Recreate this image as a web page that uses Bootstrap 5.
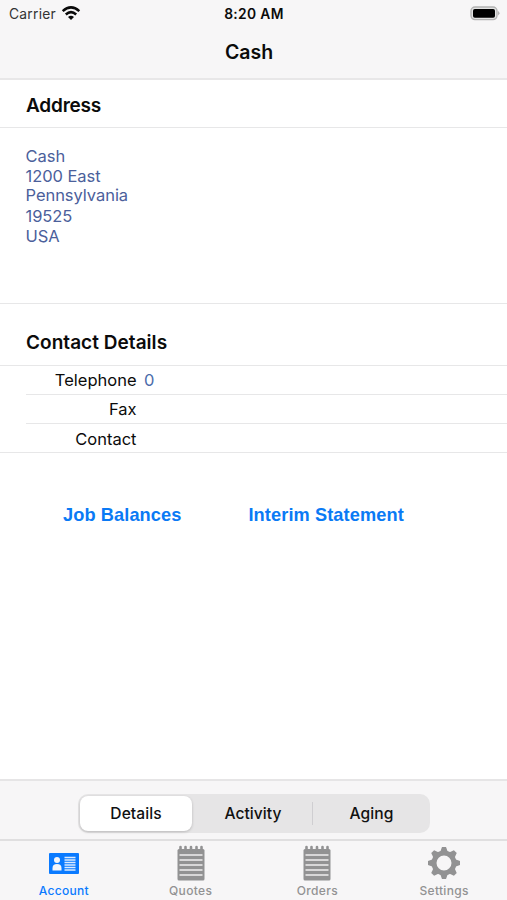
<!DOCTYPE html>
<html lang="en">
<head>
<meta charset="utf-8">
<meta name="viewport" content="width=device-width, initial-scale=1">
<title>Cash</title>
<link href="https://cdn.jsdelivr.net/npm/bootstrap@5.3.0/dist/css/bootstrap.min.css" rel="stylesheet">
<style>
body{font-family:Inter,"Liberation Sans",sans-serif;color:#0b0b0b;background:#fff;font-size:16.5px;line-height:20px}
.screen{height:900px;overflow:hidden}
.bar{background:#f7f6f7}
.topbar{height:80px;border-bottom:2px solid #e8e7e8}
.status{height:28px;padding:0 7px 0 9px}
.status>*{flex:1 1 0}
.carrier{font-size:13.8px;color:#333;letter-spacing:.25px}
.wifi{margin:-2px 0 0 4px}
.clock{font-size:13.8px;font-weight:600;letter-spacing:.35px;padding-right:1px}
.title{font-size:19.5px;font-weight:600;height:50px;padding-right:9px}
.heading{font-size:19px;font-weight:600;margin:0;padding-left:26px;letter-spacing:-.2px}
.rule{border-bottom:1px solid #e7e7e8}
.h-address{height:48px;padding-top:5px}
.address{height:176px;padding:18px 26px 0 25.5px;color:#4b609b;letter-spacing:-.05px}
.address div{height:20px}
.address div:nth-child(3){margin-top:-1px;margin-bottom:1px}
.h-contact{height:62px;padding-top:18px;letter-spacing:.04px}
.contact-row{height:29px;margin-left:26px}
.contact-row.last{margin-left:0;padding:1px 0 0 26px}
.contact-row dt{width:110.5px;font-weight:400;text-align:right}
.contact-row dd{margin:0 0 0 7.5px;color:#4b6cab}
.actions{padding:52px 63px 0;gap:67px}
.actions a{font:bold 18.2px/20px "Liberation Sans",Arial,sans-serif;letter-spacing:.1px;color:#0a7af5;text-decoration:none}
.toolbar{height:60px;border-top:2px solid #e6e5e6;padding:7px 0 0}
.segments{width:352px;height:39px;margin-left:78px;background:#e6e5e6;border-radius:10px;padding:2px}
.segments button{border:0;background:none;padding:0;width:118px;flex:none;font-size:15.6px;font-weight:500;letter-spacing:.06px;color:#111}
.segments .chosen{width:112px;margin-right:2px;background:#fff;border-radius:8px;box-shadow:0 1px 3px #0003}
.segments button:last-child{width:117px}
.segments i{width:1px;height:23px;flex:none;background:#cfced1}
.tabs{height:61px;border-top:2px solid #e0dfe0}
.tabs a{color:#929293;text-decoration:none;font-size:12px;font-weight:500;line-height:14px;letter-spacing:.32px;padding:4px 0 0 1px}
.tabs a.current{color:#0a7aff}
.tabs svg{display:block;margin-bottom:3px}
</style>
</head>
<body>
<div class="screen d-flex flex-column">
  <header class="bar topbar">
    <div class="status d-flex align-items-center">
      <div class="d-flex align-items-center"><span class="carrier">Carrier</span>
        <svg class="wifi" width="22" height="16" viewBox="0 0 22 16" fill="none" stroke="#0a0a0a" stroke-width="2.5"><path d="M2.7 6.2Q11 -1.4 19.3 6.2M5.8 9.5Q11 4.8 16.2 9.5"/><path d="M8 12Q11 9.5 14 12L11 15Z" fill="#0a0a0a" stroke="none"/></svg>
      </div>
      <div class="clock text-center"><span>8:20 AM</span></div>
      <div class="d-flex justify-content-end">
        <svg width="31" height="16" viewBox="0 0 31 16"><rect x="2" y="1" width="26" height="12.6" rx="4" fill="#e3e3e3" stroke="#b3b3b3" stroke-width="1.4"/><rect x="4" y="3" width="22" height="8.8" rx="1.8" fill="#000"/><path d="M29 5Q32 7.200 29 9.400Z" fill="#b3b3b3"/></svg>
      </div>
    </div>
    <h1 class="title d-flex align-items-center justify-content-center m-0"><span>Cash</span></h1>
  </header>
  <main class="flex-grow-1">
    <h2 class="heading h-address rule d-flex align-items-center"><span>Address</span></h2>
    <address class="address rule m-0"><div>Cash</div><div>1200 East</div><div>Pennsylvania</div><div>19525</div><div>USA</div></address>
    <h2 class="heading h-contact rule d-flex align-items-center"><span>Contact Details</span></h2>
    <dl class="m-0">
      <div class="contact-row rule d-flex align-items-center"><dt>Telephone</dt><dd>0</dd></div>
      <div class="contact-row rule d-flex align-items-center"><dt>Fax</dt></div>
      <div class="contact-row last rule d-flex align-items-center"><dt>Contact</dt></div>
    </dl>
    <div class="actions d-flex"><a href="#">Job Balances</a><a href="#">Interim Statement</a></div>
  </main>
  <footer class="bar">
    <div class="toolbar d-flex align-items-center">
      <div class="segments d-flex align-items-center">
        <button class="chosen h-100">Details</button><button>Activity</button><i></i><button>Aging</button>
      </div>
    </div>
    <nav class="tabs row g-0">
      <a class="col d-flex flex-column align-items-center current" href="#">
        <svg width="36" height="36" viewBox="0 0 36 36"><rect x="3" y="8" width="30" height="21" rx="1" fill="#0a7aff"/><g fill="#f4f6fb"><circle cx="11" cy="15" r="3"/><path d="M6.5 25.500v-2.500Q6.500 19 11 19T15.500 23V25.500Z"/></g><path d="M18.500 12.500H29.500M18.500 15H29.500M18.500 17.500H29.500M18.500 20H29.500M18.500 22.500H29.500M18.500 25H29.500" stroke="#dcebff" stroke-width="1.500"/></svg>Account</a>
      <a class="col d-flex flex-column align-items-center" href="#">
        <svg width="36" height="36" viewBox="0 0 36 36"><rect x="4.500" y="4" width="27" height="31.500" rx="1.500" fill="#929293"/><path d="M7.500 2v4M12.500 2v4M18 2v4M23.500 2v4M28.500 2v4" stroke="#929293" stroke-width="2.600" stroke-linecap="round"/><path d="M6.500 10H29.500M6.500 15H29.500M6.500 20H29.500M6.500 25H29.500M6.500 30H29.500" stroke="#d8d7d8" stroke-width="1.900"/></svg>Quotes</a>
      <a class="col d-flex flex-column align-items-center" href="#">
        <svg width="36" height="36" viewBox="0 0 36 36"><rect x="4.500" y="4" width="27" height="31.500" rx="1.500" fill="#929293"/><path d="M7.500 2v4M12.500 2v4M18 2v4M23.500 2v4M28.500 2v4" stroke="#929293" stroke-width="2.600" stroke-linecap="round"/><path d="M6.500 10H29.500M6.500 15H29.500M6.500 20H29.500M6.500 25H29.500M6.500 30H29.500" stroke="#d8d7d8" stroke-width="1.900"/></svg>Orders</a>
      <a class="col d-flex flex-column align-items-center" href="#">
        <svg width="36" height="36" viewBox="0 0 36 36"><defs><path id="tooth" d="M14 7.500L16 2H20L22 7.500Z"/></defs><g fill="#929293"><use href="#tooth"/><use href="#tooth" transform="rotate(45 18 18)"/><use href="#tooth" transform="rotate(90 18 18)"/><use href="#tooth" transform="rotate(135 18 18)"/><use href="#tooth" transform="rotate(180 18 18)"/><use href="#tooth" transform="rotate(225 18 18)"/><use href="#tooth" transform="rotate(270 18 18)"/><use href="#tooth" transform="rotate(315 18 18)"/></g><circle cx="18" cy="18" r="10" fill="none" stroke="#929293" stroke-width="5"/></svg>Settings</a>
    </nav>
  </footer>
</div>
<script src="https://cdn.jsdelivr.net/npm/bootstrap@5.3.0/dist/js/bootstrap.bundle.min.js"></script>
</body>
</html>
